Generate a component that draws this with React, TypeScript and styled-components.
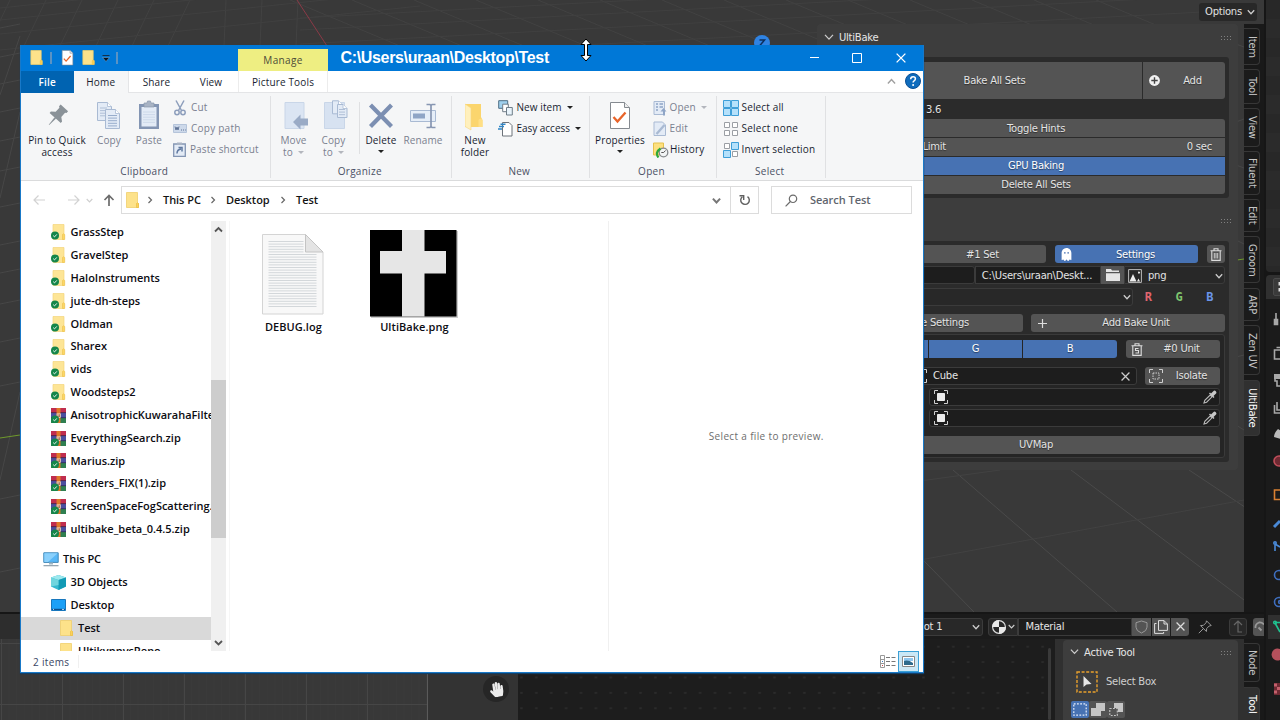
import React from 'react';
import styled, { createGlobalStyle, css } from 'styled-components';
import { FaHandPaper, FaGhost } from 'react-icons/fa';

const GlobalStyle = createGlobalStyle`
  *, *::before, *::after { box-sizing: border-box; }
  body { margin: 0; overflow: hidden; background: #1b1b1b; }
  svg { display: block; flex: none; }
`;

/* ---------- desktop ---------- */

const Screen = styled.main`
  position: relative;
  width: 1280px;
  height: 720px;
  overflow: hidden;
  display: grid;
  grid-template-columns: 1264px 16px;
  background: #161616;
  color: #e0e0e0;
  font: 10px/14px 'DejaVu Sans', sans-serif;
  letter-spacing: -0.24px;
  white-space: nowrap;
`;

const Editors = styled.div`
  display: grid;
  grid-template-rows: 612px 106px;
  row-gap: 2px;
`;

const Viewport = styled.section`
  position: relative;
  display: flex;
  flex-direction: column;
  align-items: flex-end;
  background: #393939;
  overflow: hidden;
`;

const Backdrop = styled.svg`
  position: absolute;
  inset: 0;
`;

const ViewHeader = styled.div`
  position: relative;
  height: 24px;
  width: 100%;
  padding: 3px 7px 0 0;
  display: flex;
  justify-content: flex-end;
`;

const OptionsButton = styled.button`
  all: unset;
  box-sizing: border-box;
  width: 58px;
  height: 18px;
  padding: 0 2px 0 6px;
  border-radius: 3px;
  background: #282828;
  display: flex;
  align-items: center;
  justify-content: space-between;
`;

const Region = styled.div`
  position: relative;
  display: flex;
  flex: 1;
`;

const NPanel = styled.div`
  width: 421px;
  height: 446px;
  margin-right: 6px;
  padding-right: 9px;
  border-radius: 4px;
  background: rgba(61, 61, 61, 0.96);
  display: flex;
  flex-direction: column;
  align-items: flex-end;
`;

const PanelHeader = styled.header<{ $h: number; $top?: number }>`
  width: 100%;
  height: ${(p) => p.$h}px;
  padding: ${(p) => p.$top ?? 6}px 0 0 7px;
  display: flex;
  align-items: flex-start;
  gap: 5px;
  color: #e6e6e6;
  & > svg { margin-top: 1px; }
`;

const PanelTitle = styled.span`
  flex: 1;
  height: 14px;
`;

const Grip = styled.i`
  width: 11px;
  height: 5px;
  margin: 4px -2px 0 0;
  background: radial-gradient(circle, #808080 0.7px, transparent 1px) 0 0 / 3px 3px;
`;

const Box = styled.div`
  width: 386px;
  padding: 4px;
  border-radius: 3px;
  background: #2b2b2b;
  display: flex;
  flex-direction: column;
`;

const Row = styled.div<{ $h?: number; $top?: number; $gap?: number }>`
  height: ${(p) => p.$h ?? 18}px;
  margin-top: ${(p) => p.$top ?? 0}px;
  display: flex;
  gap: ${(p) => p.$gap ?? 0}px;
`;

const fills = {
  plain: '#545454',
  active: '#4772b3',
  field: '#1d1d1d',
  menu: '#282828',
  none: 'transparent',
};

const Control = styled.div<{ $w?: number; $fill?: keyof typeof fills; $round?: string; $align?: string; $pad?: string }>`
  ${(p) => (p.$w ? css`width: ${p.$w}px; flex: none;` : css`flex: 1;`)}
  padding: ${(p) => p.$pad ?? '0'};
  border-radius: ${(p) => p.$round ?? '3px'};
  background: ${(p) => fills[p.$fill ?? 'plain']};
  border: ${(p) => (p.$fill === 'field' || p.$fill === 'menu' ? '1px solid #3b3b3b' : '0')};
  color: ${(p) => (p.$fill === 'active' ? '#fff' : '#e4e4e4')};
  display: flex;
  align-items: center;
  justify-content: ${(p) => p.$align ?? 'center'};
  text-shadow: ${(p) => (p.$fill === 'field' || p.$fill === 'menu' ? 'none' : '0 1px 1px rgba(0,0,0,.45)')};
`;

const Grow = styled.span<{ $center?: boolean; $pad?: number }>`
  flex: 1;
  padding-left: ${(p) => p.$pad ?? 0}px;
  text-align: ${(p) => (p.$center ? 'center' : 'left')};
`;

const Channel = styled.b<{ $c: string }>`
  flex: 1;
  align-self: center;
  text-align: center;
  color: ${(p) => p.$c};
  font: bold 12px/14px 'DejaVu Sans Mono', monospace;
`;

const UnitBox = styled.div`
  height: 124px;
  margin-top: 2px;
  padding: 4px 4px 0;
  border: 1px solid #3a3a3a;
  border-radius: 3px;
  background: #252525;
`;

const TabColumn = styled.nav`
  position: relative;
  width: 20px;
  padding-top: 4px;
  background: #191919;
  display: flex;
  flex-direction: column;
  align-items: flex-start;
`;

const SideTab = styled.div<{ $h: number; $top?: number; $active?: boolean }>`
  width: 16px;
  height: ${(p) => p.$h}px;
  margin-top: ${(p) => p.$top ?? 5}px;
  flex: none;
  border: 1px solid #373737;
  border-left: 0;
  border-radius: 0 4px 4px 0;
  background: ${(p) => (p.$active ? '#303030' : '#1b1b1b')};
  color: ${(p) => (p.$active ? '#fff' : '#c6c6c6')};
  writing-mode: vertical-rl;
  display: flex;
  align-items: center;
  justify-content: center;
  line-height: 16px;
`;

/* ---------- lower editors ---------- */

const LowerRow = styled.section`
  display: grid;
  grid-template-columns: 428px 90px 1fr;
  grid-template-rows: 25px 81px;
  background: #1d1d1d;
  overflow: hidden;
`;

const UvHeader = styled.div`
  grid-column: 1 / 3;
  background: #2d2d2d;
`;

const ShaderHeader = styled.div`
  display: flex;
  align-items: center;
  justify-content: flex-end;
  background: #1b1b1b;
  overflow: hidden;
  & > * { height: 18px; }
`;

const UvCanvas = styled.div`
  background:
    linear-gradient(90deg, #464646 1px, transparent 1px) 1px 0 / 61px 100%,
    linear-gradient(#464646 1px, transparent 1px) 0 4px / 100% 61px,
    linear-gradient(90deg, #3a3a3a 1px, transparent 1px) 1px 0 / 7.6px 100%,
    #383838;
  border-right: 1px solid #5a5a5a;
`;

const UvSide = styled.div`
  background: #333;
  display: flex;
  justify-content: flex-end;
  padding: 37px 9px 0 0;
`;

const PanButton = styled.div`
  width: 26px;
  height: 26px;
  border-radius: 50%;
  background: #262626;
  color: #ececec;
  display: flex;
  align-items: center;
  justify-content: center;
`;

const NodeCanvas = styled.div`
  display: flex;
  justify-content: flex-end;
  background: radial-gradient(circle, #2b2b2b 1px, transparent 1.4px) -4px 0 / 14.9px 15.4px, #1d1d1d;
`;

const NodeScroll = styled.div`
  width: 3px;
  margin: 9px 4px 0 0;
  border-radius: 2px;
  background: #3a3a3a;
`;

const NodeSidebar = styled.div`
  width: 189px;
  padding: 1px 6px 0 8px;
  background: #303030;
`;

const ToolPanel = styled.div`
  height: 100%;
  border-radius: 4px 4px 0 0;
  background: #3d3d3d;
`;

const ToolRow = styled.div`
  height: 34px;
  padding: 1px 0 0 13px;
  display: flex;
  align-items: center;
  gap: 8px;
  color: #cfcfcf;
`;

const ModeRow = styled.div`
  padding: 3px 0 0 8px;
  display: flex;
`;

const Mode = styled.div<{ $on?: boolean }>`
  width: 17.5px;
  height: 17px;
  margin-right: 0.5px;
  border-radius: 2px;
  background: ${(p) => (p.$on ? '#4772b3' : '#545454')};
  display: flex;
  align-items: center;
  justify-content: center;
`;

/* ---------- properties strip ---------- */

const Strip = styled.aside`
  padding-left: 2px;
  background: #161616;
  display: flex;
  flex-direction: column;
  overflow: hidden;
`;

const Outliner = styled.div`
  height: 272px;
  border-radius: 0 0 0 4px;
  background: repeating-linear-gradient(#282828 0 19px, #2b2b2b 19px 38px);
`;

const StripHeader = styled.div`
  height: 24px;
  margin-top: 3px;
  padding: 3px 0 0 7px;
  border-radius: 4px 0 0 0;
  background: #303030;
`;

const StripIcons = styled.div`
  flex: 1;
  background: #1b1b1b;
`;

/* ---------- Explorer window ---------- */

const Window = styled.section`
  position: absolute;
  left: 20px;
  top: 45px;
  width: 904px;
  height: 628px;
  border: 1px solid #1979c8;
  border-width: 0 1px 1px;
  background: #fff;
  box-shadow: 0 1px 1px #123f66;
  color: #181d30;
  display: grid;
  grid-template-rows: 25.5px 22px 88px 40.5px 430px 1fr;
  font: 10px/12.5px 'Open Sans', 'Noto Sans', sans-serif;
  letter-spacing: 0.15px;
`;

const TitleBar = styled.header`
  display: flex;
  background: #0078d7;
  color: #fff;
`;

const QuickAccess = styled.div`
  width: 217px;
  padding: 0 0 0 8.5px;
  display: flex;
  align-items: center;
`;

const Spacer = styled.i<{ $w: number }>`
  width: ${(p) => p.$w}px;
  flex: none;
`;

const Tick = styled.i`
  width: 2px;
  height: 12px;
  border: 1px solid #5b93c4;
  border-width: 0 1px;
`;

const ManageTab = styled.div`
  width: 90px;
  margin-top: 4px;
  background: #eeee82;
  color: #4c4c38;
  display: flex;
  align-items: center;
  justify-content: center;
  letter-spacing: 0.35px;
`;

const Title = styled.h1`
  flex: 1;
  margin: 0;
  padding-left: 12.5px;
  font: bold 16px/25px 'Liberation Sans', Arial, sans-serif;
  letter-spacing: -0.34px;
`;

const CaptionButton = styled.div`
  width: 43.5px;
  display: flex;
  align-items: center;
  justify-content: center;
`;

const TabBar = styled.nav`
  display: flex;
  border-bottom: 1px solid #e4e5e7;
`;

const Tab = styled.div<{ $w: number; $kind?: 'file' | 'on' | 'context' }>`
  width: ${(p) => p.$w}px;
  padding-top: 1.5px;
  display: flex;
  align-items: center;
  justify-content: center;
  ${(p) => p.$kind === 'file' && css`background: #0063b1; color: #fff; margin-bottom: -1px; font-weight: 600;`}
  ${(p) => p.$kind === 'on' && css`background: #f5f6f7; margin-bottom: -1px; border-right: 1px solid #e4e5e7;`}
  ${(p) => p.$kind === 'context' && css`border: 1px solid #ececec; border-width: 0 1px;`}
`;

const TabEnd = styled.div`
  flex: 1;
  padding-right: 2.5px;
  display: flex;
  align-items: center;
  justify-content: flex-end;
  gap: 9px;
`;

const Ribbon = styled.div`
  display: flex;
  background: #f5f6f7;
  border-bottom: 1px solid #dadbdc;
`;

const Group = styled.div<{ $w: number }>`
  width: ${(p) => p.$w}px;
  display: grid;
  grid-template-rows: 72px 14px;
  background: linear-gradient(#e0e1e3, #e0e1e3) right 0 top 3px / 1px 82px no-repeat;
`;

const GroupBody = styled.div<{ $left?: number }>`
  display: flex;
  padding-left: ${(p) => p.$left ?? 0}px;
`;

const GroupLabel = styled.div`
  padding-right: 3px;
  text-align: center;
  letter-spacing: 0.28px;
  color: #4a5064;
`;

const BigButton = styled.div<{ $w: number; $off?: boolean }>`
  width: ${(p) => p.$w}px;
  padding-top: 7px;
  display: flex;
  flex-direction: column;
  align-items: center;
  text-align: center;
  white-space: pre;
  color: ${(p) => (p.$off ? '#7a808f' : '#181d30')};
  & > svg { margin-bottom: 2px; }
`;

const Caret = styled.i<{ $off?: boolean }>`
  display: inline-block;
  margin: 0 0 2px 5px;
  border: 3px solid transparent;
  border-top-color: ${(p) => (p.$off ? '#b3b6bd' : '#222')};
  border-bottom: 0;
`;

const BigCaret = styled(Caret)`
  margin: 4px 0 0;
`;

const Stack = styled.div<{ $left?: number }>`
  padding: 4.5px 0 0 ${(p) => p.$left ?? 0}px;
  display: grid;
  grid-auto-rows: 21px;
`;

const SmallButton = styled.div<{ $off?: boolean; $gap?: number; $ls?: number }>`
  display: flex;
  align-items: center;
  gap: ${(p) => p.$gap ?? 4}px;
  letter-spacing: ${(p) => p.$ls ?? 0.15}px;
  color: ${(p) => (p.$off ? '#7a808f' : '#181d30')};
`;

const Divider = styled.i`
  width: 1px;
  height: 52px;
  margin: 9px 0 0 8px;
  background: #dfe0e2;
`;

const AddressRow = styled.div`
  display: flex;
  align-items: flex-start;
  padding-top: 5.5px;
  font-size: 11px;
  font-weight: 600;
  letter-spacing: -0.05px;
  color: #141414;
`;

const NavButtons = styled.div`
  width: 100px;
  height: 28px;
  padding-left: 12px;
  display: flex;
  align-items: center;
`;

const AddressBox = styled.div`
  width: 638px;
  height: 28px;
  border: 1px solid #dcdcdc;
  display: flex;
  align-items: center;
  padding-left: 4px;
`;

const Crumb = styled.span<{ $w: number }>`
  width: ${(p) => p.$w}px;
`;

const Refresh = styled.div`
  width: 28px;
  height: 26px;
  border-left: 1px solid #dcdcdc;
  display: flex;
  align-items: center;
  justify-content: center;
`;

const SearchBox = styled.div`
  width: 141px;
  height: 28px;
  margin-left: 11.5px;
  padding-left: 13px;
  border: 1px solid #dcdcdc;
  display: flex;
  align-items: center;
  gap: 12.5px;
  color: #5f656e;
`;

const Body = styled.div`
  display: grid;
  grid-template-columns: 190px 15px 382.5px 1fr;
  min-height: 0;
  overflow: hidden;
`;

const Tree = styled.div`
  overflow: hidden;
  font-size: 11px;
  font-weight: 600;
  letter-spacing: -0.02px;
  color: #0c0c12;
`;

const Node = styled.div<{ $in?: number; $gap?: number; $on?: boolean; $top?: number }>`
  height: 22.85px;
  margin-top: ${(p) => p.$top ?? 0}px;
  padding-left: ${(p) => p.$in ?? 29.5}px;
  display: flex;
  align-items: center;
  gap: ${(p) => p.$gap ?? 5}px;
  background: ${(p) => (p.$on ? '#d9d9d9' : 'transparent')};
`;

const ScrollBar = styled.div`
  background: #f0f0f0;
  display: grid;
  grid-template-rows: 159px 158px 1fr;
  justify-items: center;
`;

const Thumb = styled.div`
  width: 15px;
  background: #cdcdcd;
`;

const Files = styled.div`
  margin-left: 3px;
  border-left: 1px solid #f6f6f6;
  border-right: 1px solid #f0f0f0;
  padding: 9px 0 0 15.4px;
  display: flex;
  font-size: 11px;
  font-weight: 600;
  letter-spacing: 0.05px;
  color: #0c0c12;
`;

const FileTile = styled.figure<{ $w: number }>`
  width: ${(p) => p.$w}px;
  margin: 0;
  display: flex;
  flex-direction: column;
  align-items: center;
  gap: 3px;
`;

const Thumbnail = styled.div`
  height: 88px;
  margin-right: 1px;
  display: flex;
  align-items: flex-start;
`;

const Preview = styled.div`
  display: flex;
  align-items: center;
  justify-content: center;
  padding-left: 1px;
  letter-spacing: 0.34px;
  color: #6d6d6d;
`;

const StatusBar = styled.footer`
  display: flex;
  align-items: center;
  padding-left: 12px;
  letter-spacing: 0.33px;
  color: #3a4664;
`;

const StatusText = styled.span`
  width: 46px;
  padding-top: 1px;
  border-right: 1px solid #f0f0f0;
`;

const ViewToggle = styled.div<{ $on?: boolean }>`
  width: 21px;
  height: 21px;
  display: flex;
  align-items: center;
  justify-content: center;
  border: ${(p) => (p.$on ? '1px solid #3ba0d6' : '0')};
  background: ${(p) => (p.$on ? '#cbe8f6' : 'transparent')};
`;

const Cursor = styled.svg`
  position: absolute;
  left: 579.5px;
  top: 37.5px;
`;

/* ---------- icons ---------- */

const Chevron = ({ c = '#ccc', s = 8, w = 1.3, up = false, right = false }: { c?: string; s?: number; w?: number; up?: boolean; right?: boolean }) => (
  <svg width={s} height={s} viewBox="0 0 8 8" fill="none" stroke={c} strokeWidth={w}>
    <path d={right ? 'M2.5 1l3 3-3 3' : up ? 'M.8 5.7L4 2.3l3.2 3.4' : 'M.8 2.3L4 5.7l3.2-3.4'} />
  </svg>
);

const Folder = ({ w = 13, h = 16 }: { w?: number; h?: number }) => (
  <svg width={w} height={h} viewBox="0 0 13 16">
    <path d="M.5.5h11v10l1 1v4H.5z" fill="#fde28a" stroke="#f0cf6c" strokeWidth=".8" />
    <path d="M10.5 11.5q1-1.6 2 0v4h-2z" fill="#fbd25a" stroke="#e8b93e" strokeWidth=".6" />
  </svg>
);

const Badge = () => (
  <g>
    <circle cx="4" cy="11.5" r="4" fill="#15864a" />
    <path d="M2.2 11.6l1.3 1.3 2.3-2.5" fill="none" stroke="#fff" strokeWidth=".9" />
  </g>
);

const SyncedFolder = () => (
  <svg width="15" height="16" viewBox="0 0 15 16">
    <path d="M2 .5h11v15H2z" fill="#fde596" stroke="#f3d67c" strokeWidth=".7" />
    <path d="M11.5 10.5q1.2-1.4 2.2 0v5h-2.2z" fill="#fcd766" stroke="#ecc04a" strokeWidth=".6" />
    <Badge />
  </svg>
);

const Archive = () => (
  <svg width="15" height="15" viewBox="0 0 15 15">
    <path d="M0 0h15v5H0z" fill="#c02d4e" />
    <path d="M0 5h15v5H0z" fill="#4b4f9f" />
    <path d="M0 10h15v5H0z" fill="#2f7f50" />
    <path d="M5.5 0h4v15h-4z" fill="#e07a28" />
    <path d="M5.7 5.5h4v4.5h-4z" fill="#f3e4d2" />
    <path d="M7 6.2v2.8h1.4V6.2" fill="none" stroke="#a0522d" strokeWidth=".8" />
    <path d="M0 4.6h5.5M9.5 4.6H15M0 9.7h5.5M9.5 9.7H15" stroke="#2a2448" strokeWidth=".7" />
    <Badge />
  </svg>
);

const Monitor = () => (
  <svg width="16" height="15" viewBox="0 0 16 15">
    <path d="M.8.8h14.4v9.6H.8z" fill="#58b7f6" stroke="#3f88b8" />
    <path d="M1.3 1.3h13.4L5 10H1.3z" fill="#8ad0fb" />
    <path d="M6 10.5h4v2H6z" fill="#9fb6c4" />
    <path d="M.5 13.7h15" stroke="#8396a3" strokeWidth="1.1" />
  </svg>
);

const Cube = () => (
  <svg width="15" height="15" viewBox="0 0 15 15">
    <path d="M7.5 0L15 2.6v9L7.5 15 0 11.6v-9z" fill="#35b9cf" />
    <path d="M7.5 0L15 2.6 7.5 5 0 2.6z" fill="#9ce8ee" />
    <path d="M7.5 5L15 2.6v9L7.5 15z" fill="#129ab5" />
    <path d="M0 2.6L7.5 5v5L0 11.6z" fill="#6fd5de" />
  </svg>
);

const DesktopIcon = () => (
  <svg width="15" height="12" viewBox="0 0 15 12">
    <path d="M.5.5h14v11H.5z" fill="#1ba0f7" stroke="#1877bd" />
    <path d="M1 10.4h13" stroke="#0b4f8c" strokeWidth="1.2" />
    <path d="M2 10.4h1M11 10.4h2" stroke="#b8e0ff" />
  </svg>
);

const Sheet = ({ x, y, w, h, f = '#e3ebf6', s = '#a9bad3' }: { x: number; y: number; w: number; h: number; f?: string; s?: string }) => (
  <g>
    <path d={`M${x} ${y}h${w - 4}l4 4v${h - 4}h${-w}z`} fill={f} stroke={s} />
    <path d={`M${x + w - 4} ${y}v4h4`} fill="#fff" stroke={s} strokeWidth=".8" />
  </g>
);

const Lines = ({ x, y, w, n, c = '#a9bad3' }: { x: number; y: number; w: number; n: number; c?: string }) => (
  <path d={Array.from({ length: n }, (_, i) => `M${x} ${y + i * 2.6}h${w}`).join('')} stroke={c} strokeWidth=".9" />
);

const PinIcon = () => (
  <svg width="24" height="32" viewBox="0 0 24 32">
    <g transform="rotate(42 12 16)" fill="#8a9298">
      <path d="M7 5h10v2.400l-1.200.8v5.600l3.700 3v1.900H4.500v-1.900l3.700-3V8.200L7 7.400z" />
      <path d="M11 18.500h2L12.300 28h-.6z" />
    </g>
  </svg>
);

const CopyIcon = () => (
  <svg width="26" height="32" viewBox="0 0 26 32">
    <Sheet x={1.5} y={2.5} w={14} h={18} /><Lines x={4} y={8} w={7} n={4} />
    <Sheet x={9.5} y={9.5} w={14} h={19} /><Lines x={12} y={15.5} w={9} n={5} c="#8fa5c6" />
  </svg>
);

const PasteIcon = () => (
  <svg width="24" height="32" viewBox="0 0 24 32">
    <path d="M2 4h20v25H2z" fill="#8395b3" />
    <path d="M4.500 7h15v19.500h-15z" fill="#e3ebf6" />
    <path d="M7 3h3l.5-2h3l.5 2h3v4H7z" fill="#a8b3c4" stroke="#8b98ad" strokeWidth=".7" />
    <Lines x={6} y={12} w={12} n={5} c="#cbd7e8" />
  </svg>
);

const CutIcon = () => (
  <svg width="14" height="16" viewBox="0 0 14 16" fill="none" stroke="#8d9ebc" strokeWidth="1.5">
    <path d="M3 .5l5.500 10M11 .5l-5.500 10" />
    <circle cx="4" cy="12.500" r="2.200" /><circle cx="10" cy="12.500" r="2.200" />
  </svg>
);

const PathIcon = () => (
  <svg width="14" height="9" viewBox="0 0 14 9">
    <path d="M.5.5h13v8H.5z" fill="#cdd9ea" stroke="#b5c4da" />
    <path d="M2 2.500l1 3.500 1-3 1 3 1-3.500M8 6h1M10 6h1M12 6h.8" stroke="#5f7396" fill="none" />
  </svg>
);

const ShortcutIcon = () => (
  <svg width="13" height="15" viewBox="0 0 13 15">
    <path d="M.7 2h11.600v12.300H.7z" fill="#e3ebf6" stroke="#8395b3" strokeWidth="1.3" />
    <path d="M4 .5h5v2.500H4z" fill="#a8b3c4" />
    <path d="M4 11.500q0-4 4-4.500M5.500 5.500h3.500v4" fill="none" stroke="#5f789f" strokeWidth="1.5" />
  </svg>
);

const MoveIcon = () => (
  <svg width="28" height="32" viewBox="0 0 28 32">
    <path d="M5 2.500h19v26H5z" fill="#dbe5f3" stroke="#c9d6e8" />
    <path d="M13 22l7.500-7.500v4H28v7h-7.500v4z" fill="#9aabc6" />
  </svg>
);

const CopyToIcon = () => (
  <svg width="28" height="32" viewBox="0 0 28 32">
    <path d="M4.500 2.500h20v26h-20z" fill="#d7e2f1" stroke="#c9d6e8" />
    <Sheet x={12.5} y={0.8} w={10} h={13} />
    <Sheet x={17.5} y={4.5} w={9.5} h={13} /><Lines x={19} y={9.5} w={6} n={3} />
  </svg>
);

const DeleteIcon = () => (
  <svg width="26" height="32" viewBox="0 0 26 32">
    <path d="M2.500 5l21 21.500M23.500 5l-21 21.500" stroke="#7c8fb2" strokeWidth="4.2" />
  </svg>
);

const RenameIcon = () => (
  <svg width="28" height="32" viewBox="0 0 28 32">
    <path d="M1.500 10.500h25v11h-25z" fill="#e6eef8" stroke="#a9bad3" />
    <path d="M4 13.500h12v5H4z" fill="#8fa5c6" />
    <path d="M17.500 4.500h3.500l1 1 1-1h3.500M22 5v22M17.500 27.500h3.500l1-1 1 1h3.500" fill="none" stroke="#8796b2" strokeWidth="1.7" />
  </svg>
);

const NewFolderIcon = () => (
  <svg width="20" height="32" viewBox="0 0 20 32">
    <g transform="translate(-1 0)">
      <path d="M1 4h16v13l1.500 3v7H1z" fill="#fbd56d" />
      <path d="M1 4l6 4v22l-6-3.500z" fill="#fff0bd" stroke="#f6d780" strokeWidth=".6" />
      <path d="M14.500 20q2-2.500 4 0v7h-4z" fill="#ffdf85" />
    </g>
  </svg>
);

const NewItemIcon = () => (
  <svg width="15" height="16" viewBox="0 0 15 16">
    <path d="M.7.7h9v7.600h-9z" fill="#9fd0ee" stroke="#4f6f86" />
    <path d="M4.700 4.200h5.600v7.500H4.700z" fill="#fff" stroke="#6f7d88" />
    <path d="M8.500 7.500h5.800v7.500H8.500z" fill="#e8f3fb" stroke="#6f7d88" />
  </svg>
);

const EasyIcon = () => (
  <svg width="15" height="16" viewBox="0 0 15 16">
    <path d="M4.500 1.500h6.500l3 3v10.500H4.500z" fill="#fff" stroke="#6d737a" />
    <path d="M2.500 3.200h5M1 5.500h5M0 8h4" stroke="#2f86c8" strokeWidth="1.5" />
  </svg>
);

const PropertiesIcon = ({ w = 22, h = 32 }: { w?: number; h?: number }) => (
  <svg width={w} height={h} viewBox="0 0 22 32">
    <path d="M1.500 2.500h14l5 5v21h-19z" fill="#fff" stroke="#858a90" />
    <path d="M15.500 2.500v5h5" fill="#eee" stroke="#858a90" />
    <path d="M4.500 17l4 4.500 8-9" fill="none" stroke="#e8642a" strokeWidth="2.3" />
  </svg>
);

const OpenIcon = () => (
  <svg width="14" height="16" viewBox="0 0 14 16">
    <path d="M1 1.500h10.500v13H1z" fill="#e3ebf6" stroke="#a9bad3" />
    <path d="M3 4h2M3 7h2M3 10h2M6.500 4h3.500M6.500 7h3.500" stroke="#8fa5c6" strokeWidth="1.4" />
    <path d="M10 15.500v-4H7.500L10.500 8l3 3.500H12v4z" fill="#8fa5c6" />
  </svg>
);

const EditIcon = () => (
  <svg width="14" height="16" viewBox="0 0 14 16">
    <path d="M1 1h8.500l3 3v10.500H1z" fill="#e3ebf6" stroke="#a9bad3" />
    <path d="M3.500 13l8-9" stroke="#a9bad3" strokeWidth="2.4" />
  </svg>
);

const HistoryIcon = () => (
  <svg width="16" height="16" viewBox="0 0 16 16">
    <path d="M.5 1h10v12H.5z" fill="#fde07f" stroke="#e5c14c" />
    <circle cx="10.500" cy="10.500" r="4.300" fill="#f2f4f5" stroke="#85898c" strokeWidth="1.3" />
    <path d="M8.300 10.500h2.400l1.800-2" fill="none" stroke="#555" />
    <path d="M5.500 15.500q-4-5 2-9" fill="none" stroke="#2fa83a" strokeWidth="2.2" />
  </svg>
);

const SelectIcon = ({ m }: { m: number[] }) => (
  <svg width="16" height="16" viewBox="0 0 16 16">
    {[[0, 0], [1, 0], [0, 1], [1, 1]].map(([x, y], i) =>
      m[i] ? (
        <path key={i} d={`M${x * 8 + 0.5} ${y * 8 + 0.5}h7v7h-7z`} fill="#b5e1fb" stroke="#3f9fd8" />
      ) : (
        <path key={i} d={`M${x * 8 + 1.5} ${y * 8 + 1.5}h5v5h-5z`} fill="#fff" stroke="#9b9fa4" />
      ),
    )}
  </svg>
);

const Arrow = ({ c, dir, w = 12 }: { c: string; dir: 'l' | 'r' | 'u'; w?: number }) => (
  <svg width={w} height="12" viewBox="0 0 12 12" fill="none" stroke={c} strokeWidth={dir === 'u' ? 1.7 : 1.2}>
    <path d={dir === 'l' ? 'M12 6H1M5.500 1.500L1 6l4.500 4.500' : dir === 'r' ? 'M0 6h11M6.500 1.500L11 6l-4.500 4.500' : 'M6 12V1.500M1.500 6L6 1.500 10.500 6'} />
  </svg>
);

const Plus = ({ solid = false }: { solid?: boolean }) =>
  solid ? (
    <svg width="11" height="11" viewBox="0 0 11 11">
      <circle cx="5.500" cy="5.500" r="5.400" fill="#f0f0f0" />
      <path d="M5.500 2.300v6.400M2.300 5.500h6.400" stroke="#444" strokeWidth="1.4" />
    </svg>
  ) : (
    <svg width="9" height="9" viewBox="0 0 9 9"><path d="M4.500 0v9M0 4.500h9" stroke="#ddd" strokeWidth="1.2" /></svg>
  );

const Trash = ({ s = false }: { s?: boolean }) => (
  <svg width="12" height="13" viewBox="0 0 12 13" fill="none" stroke="#ddd" strokeWidth="1.1">
    <path d="M.5 2.700h11M4 2.500V.7h4v1.800M1.800 3v9.400h8.400V3" />
    {s ? <path d="M7.500 5.500h-3v2h3v2.500h-3" /> : <path d="M4.300 5v5.500M6 5v5.500M7.700 5v5.500" strokeWidth=".9" />}
  </svg>
);

const Corners = ({ dashed = false, empty = false }: { dashed?: boolean; empty?: boolean }) => (
  <svg width="14" height="14" viewBox="0 0 14 14" fill="none" stroke="#cfcfcf">
    <path d="M.5 4V.5H4M10 .5h3.500V4M13.500 10v3.500H10M4 13.500H.5V10" />
    {!empty && (dashed ? <path d="M4 4h6v6H4z" strokeDasharray="1.5 1" /> : <path d="M3.500 3.500h7v7h-7z" fill="#ececec" stroke="#ececec" />)}
  </svg>
);

const Dropper = () => (
  <svg width="14" height="14" viewBox="0 0 14 14">
    <path d="M1 13l.8-2.600 5.400-5.400 1.800 1.800-5.400 5.400z" fill="none" stroke="#bbb" strokeWidth="1.1" />
    <path d="M6 3.500l4.500 4.500 1-1-1-1 2.300-2.300a1.700 1.700 0 0 0-2.500-2.500L8 3.500l-1-1z" fill="#c9c9c9" />
  </svg>
);

const Cross = ({ s = 8, c = '#ccc' }: { s?: number; c?: string }) => (
  <svg width={s} height={s} viewBox="0 0 8 8"><path d="M.5.5l7 7M7.500.5l-7 7" stroke={c} strokeWidth="1.1" /></svg>
);

/* ---------- viewport scene ---------- */

const Grid = () => {
  const left: number[] = [28, 57, 84, 112, 141, 171, 207, 245, 273, 304, 342, 386, 499, 572];
  const top = Array.from({ length: 14 }, (_, i) => 350 + i * 62);
  const lean = Array.from({ length: 9 }, (_, i) => 10 + i * 36);
  return (
    <Backdrop width="1264" height="612" viewBox="0 0 1264 612" fill="none" stroke="#474747">
      {left.map((y) => <path key={y} d={`M0 ${y}L20 ${y - 4}`} />)}
      {lean.map((x) => <path key={x} d={`M${x} 0L${x - 22 + (x > 200 ? 20 : 0)} 46`} stroke="#424242" />)}
      {top.map((x) => <path key={x} d={`M${x - 60} 0L${x + 50} 46`} stroke="#424242" />)}
      {[8, 20, 34, 50].map((y) => <path key={y} d={`M0 ${y}L420 ${y - 44}M300 ${y + 10}L1240 ${y - 40}`} stroke="#404040" />)}
      <path d="M20 36L0 95M20 112L0 198M20 392L0 480" />
      {[-1, 0, 1, 2].map((i) => <path key={i} d={`M${953 + 118 * i} 470L${1117 + 143 * i} 612`} stroke="#4a4a4a" />)}
      <path d="M920 481L1000 470M920 560L1244 500" stroke="#424242" />
      <path d="M1236 44l8 3M1236 122l8-3M1236 165l8 3M1236 240l8 4M1236 357l8-2M1236 425l8 5" />
      <path d="M297 0L327 46" stroke="#8a3a47" />
      <path d="M0 438L20 435M1237 260L1244 259" stroke="#6f9a2c" />
      <circle cx="762" cy="43" r="8" fill="#2f83e3" stroke="none" />
      <path d="M759.500 40h5l-5 6" stroke="#0d2f5c" strokeWidth="1.5" />
    </Backdrop>
  );
};

const tabs: [string, number][] = [
  ['Item', 37], ['Tool', 34.5], ['View', 38.5], ['Fluent', 43.5], ['Edit', 33], ['Groom', 47], ['ARP', 33.5], ['Zen UV', 50], ['UltiBake', 56],
];

const SidePanels = () => (
  <NPanel>
    <PanelHeader $h={33} $top={7}>
      <Chevron s={10} w={1} /><PanelTitle>UltiBake</PanelTitle><Grip />
    </PanelHeader>
    <Box>
      <Row $h={37} $top={1} $gap={1}>
        <Control $w={295} $round="3px 0 0 0">Bake All Sets</Control>
        <Control $round="0 3px 3px 0" $pad="0 0 0 6px"><Plus solid /><Grow $center>Add</Grow></Control>
      </Row>
      <Row $h={20}><Control $fill="none" $align="flex-start" $pad="1px 0 0 79px">3.6</Control></Row>
      <Row $h={18}><Control $round="3px 3px 0 0" $pad="1px 0 0">Toggle Hints</Control></Row>
      <Row $top={1}><Control $round="0" $pad="0 13px 0 49px"><Grow>Time Limit</Grow>0 sec</Control></Row>
      <Row $top={1}><Control $round="0" $fill="active">GPU Baking</Control></Row>
      <Row $top={1}><Control $round="0 0 3px 3px">Delete All Sets</Control></Row>
    </Box>
    <PanelHeader $h={43} $top={16}>
      <PanelTitle /><Grip />
    </PanelHeader>
    <Box>
      <Row $gap={9}>
        <Control $w={199} $pad="1px 0 0 72px">#1 Set</Control>
        <Control $fill="active" $w={143} $pad="1px 0 0 5px"><FaGhost size={13} /><Grow $center>Settings</Grow></Control>
        <Control><Trash /></Control>
      </Row>
      <Row $top={3}>
        <Control $w={128} $fill="field" />
        <Control $w={126} $fill="field" $round="0" $pad="1px 2px 0 0">C:\Users\uraan\Deskt...</Control>
        <Control $w={23} $round="0">
          <svg width="14" height="12" viewBox="0 0 14 12"><path d="M0 3V0h5l1 1.500h7V3zM0 4.200h14V12H0z" fill="#e4e4e4" /></svg>
        </Control>
        <Control $fill="menu" $pad="1px 1px 0 3px" $round="0 3px 3px 0">
          <svg width="14" height="14" viewBox="0 0 14 14"><path d="M.6.6h12.800v12.800H.6z" fill="none" stroke="#bbb" /><path d="M1.500 12.500L5 5l3.500 7.500zM10 3.500a1 1 0 1 1 0 .1M9 12.500l1.500-3 1.500 3z" fill="#eee" /></svg>
          <Grow $pad={6}>png</Grow><Chevron />
        </Control>
      </Row>
      <Row $top={3.5}>
        <Control $w={286} $fill="menu" $pad="0 1px" $align="flex-end"><Chevron /></Control>
        <Channel $c="#e0656f">R</Channel><Channel $c="#7fc46e">G</Channel><Channel $c="#6a94e8">B</Channel>
      </Row>
      <Row $top={8.5} $gap={8}>
        <Control $w={176} $align="flex-end" $pad="0 54px 0 0">Bake Settings</Control>
        <Control $pad="0 0 0 7px"><Plus /><Grow $center>Add Bake Unit</Grow></Control>
      </Row>
      <UnitBox>
        <Row $top={1} $gap={1}>
          <Control $w={76} $fill="active" $round="3px 0 0 3px">R</Control>
          <Control $w={93} $fill="active" $round="0">G</Control>
          <Control $w={94} $fill="active" $round="0 3px 3px 0">B</Control>
          <Spacer $w={7} />
          <Control $pad="0 0 0 5px"><Trash s /><Grow $center>#0 Unit</Grow></Control>
        </Row>
        <Row $top={9} $gap={8}>
          <Control $w={285} $fill="field" $pad="0 6px 0 60px"><Corners empty /><Grow $pad={6}>Cube</Grow><Cross s={9} /></Control>
          <Control $pad="0 0 0 4px"><Corners dashed /><Grow $center>Isolate</Grow></Control>
        </Row>
        <Row $top={3}>
          <Spacer $w={77} />
          <Control $fill="field" $pad="0 2px 0 4px"><Corners /><Grow /><Dropper /></Control>
        </Row>
        <Row $top={3}>
          <Spacer $w={77} />
          <Control $fill="field" $pad="0 2px 0 4px"><Corners /><Grow /><Dropper /></Control>
        </Row>
        <Row $top={8.5}><Control>UVMap</Control></Row>
      </UnitBox>
    </Box>
  </NPanel>
);

const Lower = () => (
  <LowerRow>
    <UvHeader />
    <ShaderHeader>
      <Control $w={104} $fill="menu" $pad="1px 2px 0 35px"><Grow>Slot 1</Grow><Chevron /></Control>
      <Spacer $w={5} />
      <Control $w={30} $fill="menu" $round="3px 0 0 3px" $pad="0 2px 0 3px" $align="space-between">
        <svg width="14" height="14" viewBox="0 0 14 14"><circle cx="7" cy="7" r="6.400" fill="none" stroke="#ddd" strokeWidth="1.2" /><path d="M7 0a7 7 0 0 0-7 7h7v7a7 7 0 0 0 7-7H7z" fill="#e8e8e8" /></svg>
        <Chevron s={7} />
      </Control>
      <Control $w={114} $fill="field" $round="0" $align="flex-start" $pad="1px 0 0 6.5px">Material</Control>
      <Control $w={19} $round="0">
        <svg width="13" height="14" viewBox="0 0 13 14"><path d="M6.500 1L12 2.700v4.500Q12 11 6.500 13 1 11 1 7.200V2.700z" fill="none" stroke="#999" /></svg>
      </Control>
      <Spacer $w={1} />
      <Control $w={18} $round="0">
        <svg width="14" height="14" viewBox="0 0 14 14"><path d="M4.500.6H10l3.400 3.400v6.400H4.500zM10 .6V4h3.400M2.500 3.500H.6v9.900h9V12" fill="none" stroke="#ddd" /></svg>
      </Control>
      <Spacer $w={1} />
      <Control $w={18} $round="0 3px 3px 0"><Cross s={9} c="#ddd" /></Control>
      <Spacer $w={8} />
      <Control $w={15} $fill="none">
        <svg width="14" height="14" viewBox="0 0 14 14"><path d="M8.500.8l4.700 4.700-2 .5-2.500 2.500-.3 3L2.500 5.600l3-.3L8 2.800zM5 9L.8 13.200" fill="none" stroke="#999" /></svg>
      </Control>
      <Spacer $w={17} />
      <Control $w={18} $fill="menu">
        <svg width="10" height="13" viewBox="0 0 10 13"><path d="M9 12H5V1M1 5l4-4 4 4" fill="none" stroke="#666" strokeWidth="1.2" /></svg>
      </Control>
      <Spacer $w={6} />
      <Control $w={11} $round="3px 0 0 3px">
        <svg width="10" height="12" viewBox="0 0 10 12"><path d="M1.500 7Q1 3 5 1.500q3-.5 5 2M4.500 6.500l3 3" fill="none" stroke="#999" strokeWidth="1.8" /></svg>
      </Control>
    </ShaderHeader>
    <UvCanvas />
    <UvSide><PanButton><FaHandPaper size={15} transform="rotate(-8)" /></PanButton></UvSide>
    <NodeCanvas>
      <NodeScroll />
      <NodeSidebar>
        <ToolPanel>
          <PanelHeader $h={24}><Chevron s={9} w={1.1} /><PanelTitle>Active Tool</PanelTitle><Grip /><Spacer $w={4} /></PanelHeader>
          <ToolRow>
            <svg width="22" height="22" viewBox="0 0 22 22"><path d="M1 1h20v20H1z" fill="none" stroke="#e8a02c" strokeWidth="1.4" strokeDasharray="3 1.6" /><path d="M7.500 5v11l3-2.500 5-.5z" fill="#e6e6e6" /></svg>
            Select Box
          </ToolRow>
          <ModeRow>
            <Mode $on><svg width="14" height="13" viewBox="0 0 14 13"><path d="M.8.8h12.400v11.400H.8z" fill="none" stroke="#e8eefa" strokeWidth="1.2" strokeDasharray="1.8 1.4" /></svg></Mode>
            <Mode><svg width="14" height="13" viewBox="0 0 14 13"><path d="M5 0h9v8h-4v5H0V5h5z" fill="#c6c6c6" /></svg></Mode>
            <Mode><svg width="14" height="13" viewBox="0 0 14 13"><path d="M5 0h9v9h-5V5H5z" fill="#c6c6c6" /><path d="M.8 5.500h7.500v7H.8z" fill="none" stroke="#c6c6c6" strokeWidth="1.1" strokeDasharray="1.8 1.4" /></svg></Mode>
          </ModeRow>
        </ToolPanel>
      </NodeSidebar>
      <TabColumn>
        <SideTab $h={39} $top={0}>Node</SideTab>
        <SideTab $h={35} $active>Tool</SideTab>
      </TabColumn>
    </NodeCanvas>
  </LowerRow>
);

const PropertyStrip = () => (
  <Strip>
    <Outliner />
    <StripHeader>
      <svg width="10" height="18" viewBox="0 0 10 18"><path d="M10 .5H2Q.5.500.5 2v14q0 1.500 1.500 1.500h8" fill="#3a3a3a" stroke="#4a4a4a" /><path d="M5.500 4h3.500v3.500H5.500zM5.500 10h3.500v3.500H5.500z" fill="#ddd" /></svg>
    </StripHeader>
    <StripIcons>
      <svg width="14" height="421" viewBox="1266 299 14 421" fill="none" stroke="#a8a8a8" strokeWidth="1.6">
        <path d="M1268 615h12v24h-12z" fill="#303030" stroke="none" />
        <path d="M1276 313v6M1274.500 319.500h3v5h-3z" fill="#a8a8a8" />
        <path d="M1280 350h-5.500v9h5.500M1276.500 347.500h4" />
        <path d="M1280 376h-5v5h2v5h3" /><path d="M1274 374h6v5h-6z" fill="#a8a8a8" stroke="none" />
        <path d="M1274.500 405v8h6M1277 402v8h4" />
        <path d="M1274 437q0-4 4-8l3 2v8z" fill="#bbb" stroke="none" />
        <circle cx="1279" cy="461" r="5" stroke="#c04e5a" fill="#6e2a33" />
        <path d="M1280 490h-5.500v9.500h6" stroke="#d98032" />
        <path d="M1274 527l6-6" stroke="#4a8ad8" strokeWidth="3" />
        <path d="M1275 544l5 3M1275 545v6" stroke="#4a8ad8" /><circle cx="1275" cy="543" r="1.2" stroke="#4a8ad8" />
        <circle cx="1279" cy="575" r="4.5" stroke="#3f6fc0" />
        <circle cx="1279" cy="602" r="4.5" stroke="#3f6fc0" /><circle cx="1280" cy="602" r="1.4" stroke="#3f6fc0" />
        <path d="M1275 622.500h6M1275 623l5 9" stroke="#1fc290" /><circle cx="1275" cy="622.500" r="1.3" stroke="#1fc290" />
        <path d="M1280 649a6 6 0 1 0 0 11z" fill="#b5505c" stroke="none" />
        <path d="M1274 683h6v12h-6z" fill="#6e2a33" stroke="none" /><path d="M1274 685h3M1277 688.500h3M1274 692h3" stroke="#c4606c" strokeWidth="3" />
      </svg>
    </StripIcons>
  </Strip>
);

/* ---------- Explorer ---------- */

const RibbonGroups = () => (
  <Ribbon>
    <Group $w={249.5}>
      <GroupBody>
        <BigButton $w={72}><PinIcon />{'Pin to Quick\naccess'}</BigButton>
        <BigButton $w={32} $off><CopyIcon />Copy</BigButton>
        <BigButton $w={48} $off><PasteIcon />Paste</BigButton>
        <Stack>
          <SmallButton $off><CutIcon />Cut</SmallButton>
          <SmallButton $off $ls={0.24}><PathIcon />Copy path</SmallButton>
          <SmallButton $off $ls={0.1}><ShortcutIcon />Paste shortcut</SmallButton>
        </Stack>
      </GroupBody>
      <GroupLabel>Clipboard</GroupLabel>
    </Group>
    <Group $w={181.5}>
      <GroupBody>
        <BigButton $w={46} $off><MoveIcon /><span>Move<br />to<Caret $off /></span></BigButton>
        <BigButton $w={34} $off><CopyToIcon /><span>Copy<br />to<Caret $off /></span></BigButton>
        <Divider />
        <BigButton $w={43}><DeleteIcon />Delete<BigCaret /></BigButton>
        <BigButton $w={41} $off><RenameIcon />Rename</BigButton>
      </GroupBody>
      <GroupLabel>Organize</GroupLabel>
    </Group>
    <Group $w={137.5}>
      <GroupBody>
        <BigButton $w={46}><NewFolderIcon />{'New\nfolder'}</BigButton>
        <Stack>
          <SmallButton $ls={0.08} $gap={3.5}><NewItemIcon /><span>New item<Caret /></span></SmallButton>
          <SmallButton $ls={-0.03} $gap={3.5}><EasyIcon /><span>Easy access<Caret /></span></SmallButton>
        </Stack>
      </GroupBody>
      <GroupLabel>New</GroupLabel>
    </Group>
    <Group $w={127}>
      <GroupBody>
        <BigButton $w={61}><PropertiesIcon />Properties<BigCaret /></BigButton>
        <Stack $left={2}>
          <SmallButton $off $gap={3}><OpenIcon /><span>Open<Caret $off /></span></SmallButton>
          <SmallButton $off $gap={3}><EditIcon />Edit</SmallButton>
          <SmallButton $gap={1.5}><HistoryIcon />History</SmallButton>
        </Stack>
      </GroupBody>
      <GroupLabel>Open</GroupLabel>
    </Group>
    <Group $w={109.5}>
      <GroupBody $left={6.5}>
        <Stack>
          <SmallButton $gap={2.5}><SelectIcon m={[1, 1, 1, 1]} />Select all</SmallButton>
          <SmallButton $gap={2.5} $ls={0.24}><SelectIcon m={[0, 0, 0, 0]} />Select none</SmallButton>
          <SmallButton $gap={2.5}><SelectIcon m={[0, 1, 1, 0]} />Invert selection</SmallButton>
        </Stack>
      </GroupBody>
      <GroupLabel>Select</GroupLabel>
    </Group>
  </Ribbon>
);

const folders = ['GrassStep', 'GravelStep', 'HaloInstruments', 'jute-dh-steps', 'Oldman', 'Sharex', 'vids', 'Woodsteps2'];
const archives = ['AnisotrophicKuwarahaFilter.zip', 'EverythingSearch.zip', 'Marius.zip', 'Renders_FIX(1).zip', 'ScreenSpaceFogScattering.zip', 'ultibake_beta_0.4.5.zip'];

const Explorer = () => (
  <Window>
    <TitleBar>
      <QuickAccess>
        <Folder w={13} h={15} /><Spacer $w={7} /><Tick /><Spacer $w={9} />
        <PropertiesIcon w={13} h={18} /><Spacer $w={8} /><Folder w={13} h={15} /><Spacer $w={7} />
        <svg width="8" height="8" viewBox="0 0 8 8"><path d="M.5 1.500h7" stroke="#12304d" /><path d="M.5 3.500h7L4 7.500z" fill="#081420" stroke="#7fb3df" strokeWidth=".5" /></svg>
        <Spacer $w={6} /><Tick />
      </QuickAccess>
      <ManageTab>Manage</ManageTab>
      <Title>C:\Users\uraan\Desktop\Test</Title>
      <CaptionButton><svg width="9" height="9"><path d="M0 4.500h9" stroke="#fff" /></svg></CaptionButton>
      <CaptionButton><svg width="11" height="10"><path d="M.5.5h9v9h-9z" fill="none" stroke="#fff" /></svg></CaptionButton>
      <CaptionButton><Cross s={10} c="#fff" /></CaptionButton>
    </TitleBar>
    <TabBar>
      <Tab $w={52.5} $kind="file">File</Tab>
      <Tab $w={55.5} $kind="on">Home</Tab>
      <Tab $w={55}>Share</Tab>
      <Tab $w={54}>View</Tab>
      <Tab $w={90} $kind="context">Picture Tools</Tab>
      <TabEnd>
        <Chevron c="#a0a0a0" s={9} up />
        <svg width="16" height="16" viewBox="0 0 16 16"><circle cx="8" cy="8" r="7.500" fill="#0f6cbd" stroke="#0a4f94" /><path d="M5.700 6.300q0-2.500 2.400-2.500 2.300 0 2.300 2 0 1.300-1.300 2-1 .6-1 1.600" fill="none" stroke="#fff" strokeWidth="1.5" /><circle cx="8.100" cy="11.900" r="1" fill="#fff" /></svg>
      </TabEnd>
    </TabBar>
    <RibbonGroups />
    <AddressRow>
      <NavButtons>
        <Arrow c="#d2d2d2" dir="l" /><Spacer $w={23} /><Arrow c="#d2d2d2" dir="r" /><Spacer $w={5.5} />
        <Chevron c="#cfcfcf" s={7} /><Spacer $w={10} /><Arrow c="#6c6c6c" dir="u" />
      </NavButtons>
      <AddressBox>
        <Folder /><Spacer $w={7} /><Chevron right c="#666" w={1.2} /><Spacer $w={9} />
        <Crumb $w={46}>This PC</Crumb><Chevron right c="#666" w={1.2} /><Spacer $w={9} />
        <Crumb $w={53}>Desktop</Crumb><Chevron right c="#666" w={1.2} /><Spacer $w={9} />
        <Grow>Test</Grow><Chevron c="#777" s={9} w={1.8} /><Spacer $w={9.5} />
        <Refresh>
          <svg width="12" height="12" viewBox="0 0 12 12" fill="none" stroke="#606060" strokeWidth="1.4"><path d="M8.500 2.600A4.300 4.300 0 1 1 3.400 2.700" /><path d="M.5 1.800h4.200V6" /></svg>
        </Refresh>
      </AddressBox>
      <SearchBox>
        <svg width="13" height="13" viewBox="0 0 13 13" fill="none" stroke="#6b6b6b" strokeWidth="1.2"><circle cx="8" cy="4.800" r="3.700" /><path d="M5.400 7.500L.6 12.300" /></svg>
        Search Test
      </SearchBox>
    </AddressRow>
    <Body>
      <Tree>
        {folders.map((f) => <Node key={f}><SyncedFolder />{f}</Node>)}
        {archives.map((f) => <Node key={f}><Archive />{f}</Node>)}
        <Node $in={22} $gap={4} $top={7.5}><Monitor />This PC</Node>
        <Node><Cube />3D Objects</Node>
        <Node><DesktopIcon />Desktop</Node>
        <Node $in={39} $gap={5} $on><Folder />Test</Node>
        <Node $in={39} $gap={5}><Folder />UltikynnysRepo</Node>
      </Tree>
      <ScrollBar>
        <svg width="9" height="16" viewBox="0 0 9 16"><path d="M1 10.500l3.500-3.500L8 10.500" fill="none" stroke="#555" strokeWidth="1.8" /></svg>
        <Thumb />
        <svg width="9" height="113" viewBox="0 0 9 113"><path d="M1 103l3.500 3.500L8 103" fill="none" stroke="#555" strokeWidth="1.8" /></svg>
      </ScrollBar>
      <Files>
        <FileTile $w={96}>
          <Thumbnail>
            <svg width="62" height="86" viewBox="0 0 62 86">
              <path d="M.5 4.500h43l17.500 17.500v62H.500z" fill="#f8f8f8" stroke="#d4d4d4" />
              <path d={Array.from({ length: 26 }, (_, i) => `M6.500 ${11.5 + i * 2.6}h${i < 5 ? 35 : 48}`).join('')} stroke="#d3d7da" strokeWidth="1" />
              <path d="M43.500 4.500V22H61z" fill="#e4e4e4" stroke="#c4c4c4" />
            </svg>
          </Thumbnail>
          DEBUG.log
        </FileTile>
        <FileTile $w={146}>
          <Thumbnail>
            <svg width="88" height="88" viewBox="0 0 88 88">
              <path d="M1 1h87v87H1z" fill="#ccc" />
              <path d="M0 0h86.500v86.500H0z" fill="#000" />
              <path d="M32 0h22.500v21H76v22.500H54.500v43H32v-43H10V21h22z" fill="#e6e6e6" />
            </svg>
          </Thumbnail>
          UltiBake.png
        </FileTile>
      </Files>
      <Preview>Select a file to preview.</Preview>
    </Body>
    <StatusBar>
      <StatusText>2 items</StatusText>
      <Grow />
      <ViewToggle>
        <svg width="16" height="13" viewBox="0 0 16 13"><path d="M.5.5h4v12h-4zM.5 4.500h4M.5 8.500h4" fill="none" stroke="#999" /><path d="M6 2.500h4M11.500 2.500h4M6 6.500h4M11.500 6.500h4M6 10.500h4M11.500 10.500h4" stroke="#777" /><path d="M2 6.500h1" stroke="#3b7fc4" /><path d="M2 10.500h1" stroke="#c44" /></svg>
      </ViewToggle>
      <ViewToggle $on>
        <svg width="13" height="11" viewBox="0 0 13 11"><path d="M.5.5h12v10H.5z" fill="#fff" stroke="#888" /><path d="M2 2h9v3H2z" fill="#8fc6ee" /><path d="M2 5q4-1.500 9 2v2H2z" fill="#2d6a8c" /></svg>
      </ViewToggle>
      <Spacer $w={4} />
    </StatusBar>
  </Window>
);

export default function App() {
  return (
    <>
      <GlobalStyle />
      <Screen>
        <Editors>
          <Viewport>
            <Grid />
            <ViewHeader><OptionsButton>Options<Chevron /></OptionsButton></ViewHeader>
            <Region>
              <SidePanels />
              <TabColumn>
                {tabs.map(([name, h], i) => (
                  <SideTab key={name} $h={h} $top={i ? 4.35 : 0} $active={name === 'UltiBake'}>{name}</SideTab>
                ))}
              </TabColumn>
            </Region>
          </Viewport>
          <Lower />
        </Editors>
        <PropertyStrip />
        <Explorer />
        <Cursor width="12" height="24" viewBox="0 0 12 24">
          <path d="M6 1L11 6.500H7.500v11H11L6 23 1 17.500h3.500v-11H1z" fill="#fff" stroke="#000" />
        </Cursor>
      </Screen>
    </>
  );
}
